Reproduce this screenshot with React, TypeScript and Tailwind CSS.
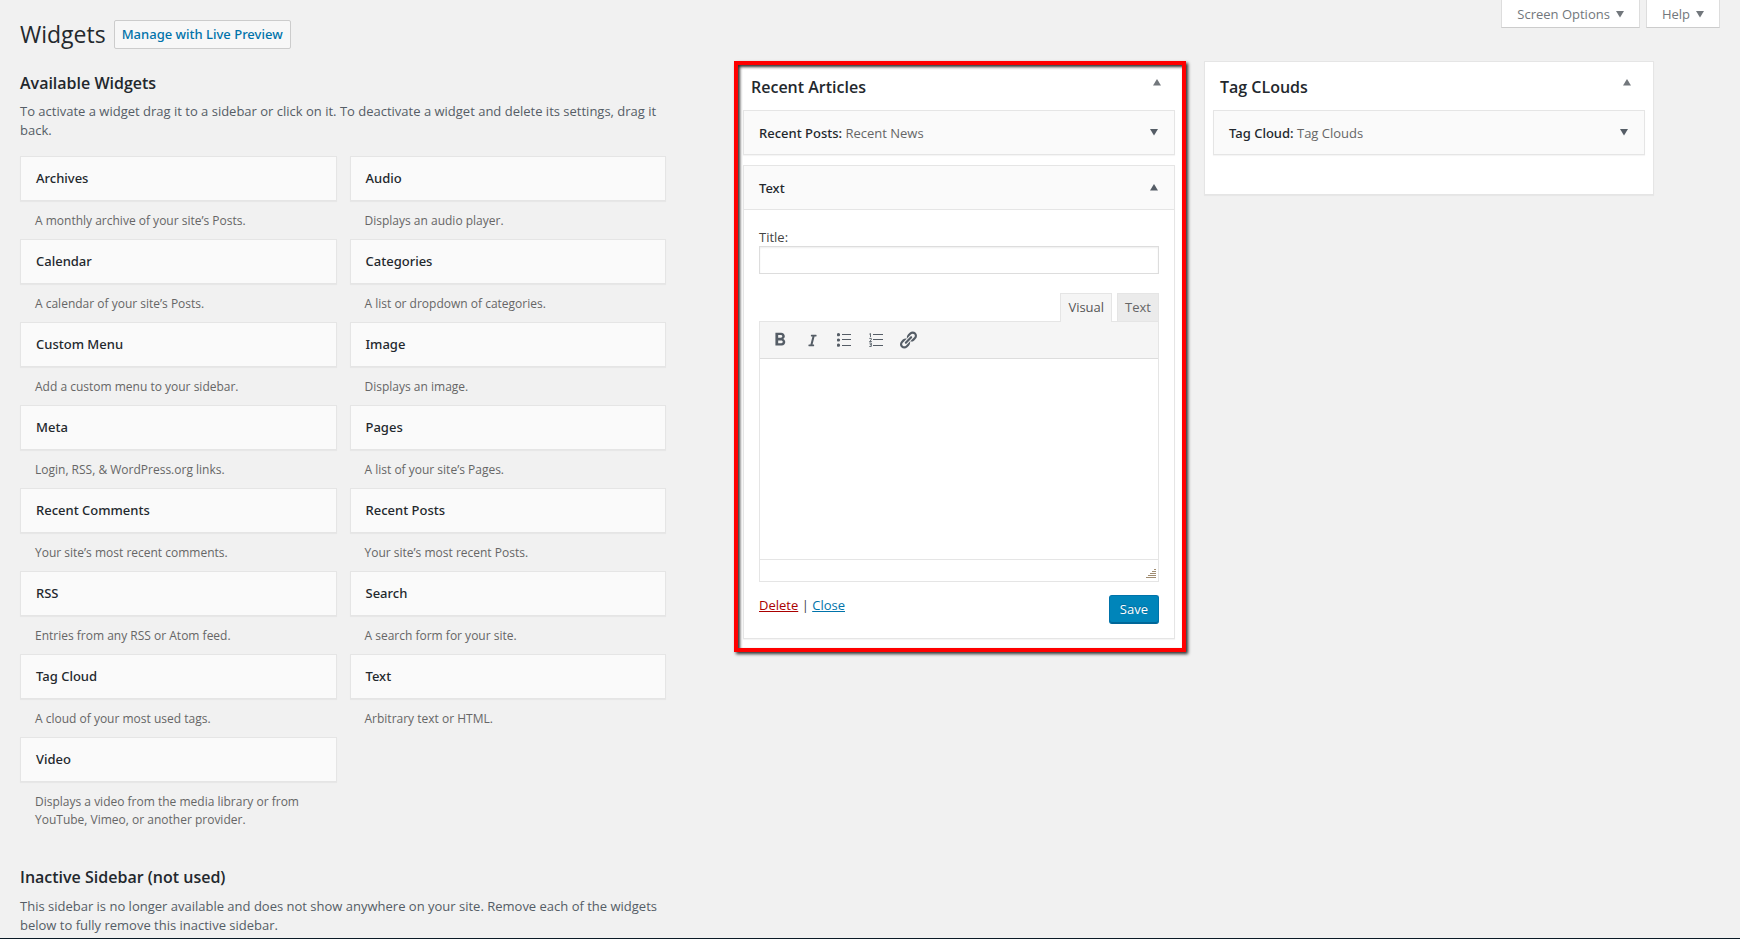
import type { ReactNode } from "react";
import { FaItalic } from "react-icons/fa";
import { MdFormatBold } from "react-icons/md";

interface Widget {
  name: string;
  description: string;
}

const availableWidgets: Widget[] = [
  { name: "Archives", description: "A monthly archive of your site’s Posts." },
  { name: "Audio", description: "Displays an audio player." },
  { name: "Calendar", description: "A calendar of your site’s Posts." },
  { name: "Categories", description: "A list or dropdown of categories." },
  { name: "Custom Menu", description: "Add a custom menu to your sidebar." },
  { name: "Image", description: "Displays an image." },
  { name: "Meta", description: "Login, RSS, & WordPress.org links." },
  { name: "Pages", description: "A list of your site’s Pages." },
  { name: "Recent Comments", description: "Your site’s most recent comments." },
  { name: "Recent Posts", description: "Your site’s most recent Posts." },
  { name: "RSS", description: "Entries from any RSS or Atom feed." },
  { name: "Search", description: "A search form for your site." },
  { name: "Tag Cloud", description: "A cloud of your most used tags." },
  { name: "Text", description: "Arbitrary text or HTML." },
  { name: "Video", description: "Displays a video from the media library or from YouTube, Vimeo, or another provider." },
];

function Arrow({ up = false }: { up?: boolean }) {
  return (
    <svg width="8" height="7" viewBox="0 0 8 7" fill="currentColor" aria-hidden="true">
      {up ? <path d="M4 0l4 6.5H0z" /> : <path d="M0 0h8L4 6.5z" />}
    </svg>
  );
}

function BulletListIcon() {
  return (
    <svg width="14" height="14" viewBox="0 0 14 14" fill="currentColor" aria-hidden="true">
      <circle cx="1.5" cy="1.7" r="1.6" />
      <circle cx="1.5" cy="7" r="1.6" />
      <circle cx="1.5" cy="12.2" r="1.6" />
      <path d="M5 1h9v1H5zM5 6h9v1H5zM5 12h9v1H5z" />
    </svg>
  );
}

function NumberListIcon() {
  return (
    <svg width="14" height="14" viewBox="0 0 14 14" fill="none" stroke="currentColor" aria-hidden="true">
      <path d="M.3 1.2L1.5.5V4" strokeWidth=".9" />
      <path d="M.3 5.4h2v1.4L.5 8.500h2.300" strokeWidth=".9" />
      <path d="M.3 10h2v3.500H.3M.8 11.700h1.500" strokeWidth=".9" />
      <path d="M4 1.500h10M4 6.500h10M4 12.500h10" />
    </svg>
  );
}

function LinkIcon() {
  return (
    <svg width="20" height="20" viewBox="0 0 20 20" fill="currentColor" aria-hidden="true">
      <path d="M17.74 2.76c1.68 1.69 1.68 4.41 0 6.1l-1.53 1.52c-1.12 1.12-2.7 1.47-4.14 1.09l2.62-2.61.76-.77.76-.76c.84-.84.84-2.2 0-3.04-.84-.85-2.2-.85-3.04 0l-.77.76-3.38 3.38c-.37-1.44-.02-3.02 1.1-4.14l1.52-1.53c1.69-1.68 4.42-1.68 6.1 0zM8.59 13.43l5.34-5.34c.42-.42.42-1.1 0-1.52-.44-.43-1.13-.39-1.53 0l-5.33 5.34c-.42.42-.42 1.1 0 1.52.44.43 1.13.39 1.52 0zm-.76 2.29l4.14-4.15c.38 1.44.03 3.02-1.09 4.14l-1.52 1.53c-1.69 1.68-4.41 1.68-6.1 0-1.68-1.68-1.68-4.42 0-6.1l1.53-1.52c1.12-1.12 2.7-1.47 4.14-1.1l-4.14 4.15c-.85.84-.85 2.2 0 3.05.84.84 2.2.84 3.04 0z" />
    </svg>
  );
}

function ToolbarButton({ label, children }: { label: string; children: ReactNode }) {
  return (
    <button type="button" aria-label={label} className="flex h-7 w-8 items-center justify-center text-[#555d66]">
      {children}
    </button>
  );
}

function ScreenTab({ label }: { label: string }) {
  return (
    <button
      type="button"
      className="flex h-7 items-center gap-[6px] border border-t-0 border-[#ddd] border-b-[#ccc] bg-white px-[15px] pt-[2px] text-[13px] text-[#72777c]"
    >
      {label}
      <Arrow />
    </button>
  );
}

function AvailableWidget({ name, description }: Widget) {
  return (
    <div className="pb-[9px]">
      <h3 className="flex h-[45px] items-center border border-[#e5e5e5] bg-[#fafafa] px-[15px] font-['Noto_Sans',sans-serif] text-[13px] font-medium shadow-[0_1px_1px_rgba(0,0,0,0.04)]">
        {name}
      </h3>
      <p className="mt-[11px] px-[15px] text-[12px] leading-[18px] text-[#666]">{description}</p>
    </div>
  );
}

function SidebarHeading({ title }: { title: string }) {
  return (
    <div className="flex h-[45px] items-start justify-between">
      <h2 className="pt-[10px] text-[16px] leading-6 font-semibold">{title}</h2>
      <button type="button" aria-label={`Toggle ${title}`} className="mt-[14px] mr-[14px] text-[#72777c]">
        <Arrow up />
      </button>
    </div>
  );
}

function WidgetBar({ name, title, open }: { name: string; title?: string; open?: boolean }) {
  return (
    <div className="flex h-[43px] items-center justify-between bg-[#fafafa] pr-4 pl-[15px]">
      <h3 className="pt-[2px] font-['Noto_Sans',sans-serif] text-[13px] font-medium">
        {name}
        {title && (
          <>
            : <span className="font-['Open_Sans',sans-serif] font-normal text-[#666]">{title}</span>
          </>
        )}
      </h3>
      <button type="button" aria-label={`Toggle ${name}`} className="text-[#555d66]">
        <Arrow up={open} />
      </button>
    </div>
  );
}

function TextWidgetForm() {
  return (
    <form className="border-t border-[#e5e5e5] px-[15px] pt-[18px] pb-[14px] text-[13px] text-[#444]">
      <label htmlFor="widget-title" className="block leading-[18px]">
        Title:
      </label>
      <input
        id="widget-title"
        type="text"
        className="block h-7 w-full border border-[#ddd] bg-white px-1 shadow-[inset_0_1px_2px_rgba(0,0,0,0.07)]"
      />
      <div className="mt-[19px] flex justify-end gap-[5px]">
        <button
          type="button"
          className="relative -mb-px h-[29px] border border-b-0 border-[#e5e5e5] bg-[#f5f5f5] px-[7px] text-[#555]"
        >
          Visual
        </button>
        <button type="button" className="h-7 border border-b-0 border-[#e5e5e5] bg-[#ebebeb] px-[7px] text-[#666]">
          Text
        </button>
      </div>
      <div className="border border-[#e5e5e5] bg-white">
        <div className="flex h-[37px] items-center border-b border-[#ddd] bg-[#f5f5f5] pl-1">
          <ToolbarButton label="Bold">
            <MdFormatBold size={22} />
          </ToolbarButton>
          <ToolbarButton label="Italic">
            <FaItalic size={13} />
          </ToolbarButton>
          <ToolbarButton label="Bulleted list">
            <BulletListIcon />
          </ToolbarButton>
          <ToolbarButton label="Numbered list">
            <NumberListIcon />
          </ToolbarButton>
          <ToolbarButton label="Insert link">
            <LinkIcon />
          </ToolbarButton>
        </div>
        <textarea aria-label="Text content" className="block h-[200px] w-full resize-none p-2 outline-none" />
        <div className="flex h-[22px] items-end justify-end border-t border-[#e5e5e5] pr-[2px] pb-[3px] text-[#a08c70]">
          <svg width="10" height="10" viewBox="0 0 10 10" fill="currentColor" aria-hidden="true">
            <path d="M8 1h2v1H8zM6 3h4v1H6zM4 5h6v1H4zM2 7h8v1H2zM0 9h10v1H0z" />
          </svg>
        </div>
      </div>
      <div className="mt-[13px] flex justify-between">
        <div className="leading-[20px]">
          <a href="#delete" className="text-[#a00] underline">
            Delete
          </a>{" "}
          |{" "}
          <a href="#close" className="text-[#0073aa] underline">
            Close
          </a>
        </div>
        <button
          type="submit"
          className="h-[29px] rounded-[3px] border border-[#0073aa] border-b-[#006799] bg-[#0085ba] px-[10px] text-white shadow-[inset_0_-1px_0_#006799] [text-shadow:0_-1px_1px_#006799]"
        >
          Save
        </button>
      </div>
    </form>
  );
}

function App() {
  return (
    <div className="flex h-screen flex-col overflow-hidden border-b border-[#0b1a26] bg-[#f1f1f1] px-5 font-['Open_Sans',sans-serif] text-[#23282d]">
      <header className="flex h-[61px] shrink-0 items-start justify-between">
        <div className="flex items-center gap-2 pt-[19px]">
          <h1 className="pt-px text-[23px] leading-[29px]">Widgets</h1>
          <a
            href="#preview"
            className="flex h-[29px] items-center rounded-[2px] border border-[#ccc] bg-[#f7f7f7] px-[7px] pt-px font-['Noto_Sans',sans-serif] text-[13px] font-medium text-[#0073aa]"
          >
            Manage with Live Preview
          </a>
        </div>
        <div className="flex gap-[6px]">
          <ScreenTab label="Screen Options" />
          <ScreenTab label="Help" />
        </div>
      </header>

      <main className="flex min-h-0 flex-1 items-start">
        <div className="w-[38%] shrink-0">
          <h2 className="pt-[10px] text-[16px] leading-6 font-semibold">Available Widgets</h2>
          <p className="mt-[7px] text-[13px] leading-[19px] text-[#555d66]">
            To activate a widget drag it to a sidebar or click on it. To deactivate a widget and delete its settings,
            drag it back.
          </p>
          <div className="mt-4 grid grid-cols-2 gap-x-[13px]">
            {availableWidgets.map((widget) => (
              <AvailableWidget key={widget.name} {...widget} />
            ))}
          </div>
          <h2 className="mt-[27px] text-[16px] leading-6 font-semibold">Inactive Sidebar (not used)</h2>
          <p className="mt-[8px] text-[13px] leading-[19px] text-[#555d66]">
            This sidebar is no longer available and does not show anywhere on your site. Remove each of the widgets
            below to fully remove this inactive sidebar.
          </p>
        </div>

        <div className="ml-[68px] grid flex-1 grid-cols-[452fr_450fr] items-start gap-[18px] pr-[66px]">
          <section className="border-4 border-[#f00] bg-white pr-[7px] pb-[9px] pl-[5px] shadow-[2px_2px_3px_rgba(0,0,0,0.8),inset_2px_2px_3px_rgba(0,0,0,0.8)]">
            <div className="pl-2">
              <SidebarHeading title="Recent Articles" />
            </div>
            <div className="border border-[#e5e5e5] shadow-[0_1px_1px_rgba(0,0,0,0.04)]">
              <WidgetBar name="Recent Posts" title="Recent News" />
            </div>
            <div className="mt-[10px] border border-[#e5e5e5] bg-white shadow-[0_1px_1px_rgba(0,0,0,0.04)]">
              <WidgetBar name="Text" open />
              <TextWidgetForm />
            </div>
          </section>

          <section className="border border-[#e5e5e5] bg-white px-2 pt-[3px] pb-[39px] shadow-[0_1px_1px_rgba(0,0,0,0.04)]">
            <div className="pl-[7px]">
              <SidebarHeading title="Tag CLouds" />
            </div>
            <div className="border border-[#e5e5e5] shadow-[0_1px_1px_rgba(0,0,0,0.04)]">
              <WidgetBar name="Tag Cloud" title="Tag Clouds" />
            </div>
          </section>
        </div>
      </main>
    </div>
  );
}

export default App;
